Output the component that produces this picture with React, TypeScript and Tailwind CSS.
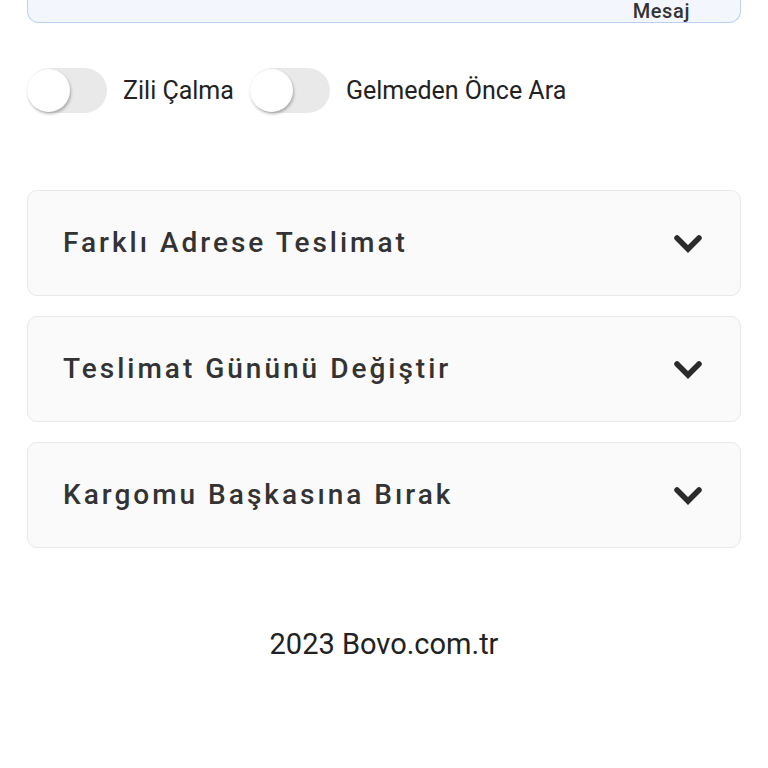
import { useState } from 'react';

const sections = ['Farklı Adrese Teslimat', 'Teslimat Gününü Değiştir', 'Kargomu Başkasına Bırak'];

function Toggle({ label }: { label: string }) {
  const [on, setOn] = useState(false);
  return (
    <button type="button" onClick={() => setOn(!on)} className="flex items-center gap-4">
      <span
        className={`flex h-[45px] w-[80px] items-center rounded-full ${on ? 'justify-end bg-[#9ec3f5]' : 'justify-start bg-[#e9e9e9]'}`}
      >
        <span className="h-[43px] w-[43px] rounded-full bg-white shadow-[1px_2px_3px_rgba(0,0,0,0.28)]" />
      </span>
      <span className="text-[25px] leading-none text-[#222]">{label}</span>
    </button>
  );
}

function ChevronDown() {
  return (
    <svg width="30" height="22" viewBox="0 0 30 22" fill="none">
      <path d="M4 6 L15 17 L26 6" stroke="#2b2b2b" strokeWidth="5.5" strokeLinecap="round" strokeLinejoin="miter" />
    </svg>
  );
}

export default function App() {
  const [open, setOpen] = useState<number | null>(null);

  return (
    <div className="min-h-[768px] bg-white px-[27px] font-['Roboto',sans-serif]">
      <div className="flex h-[23px] items-end justify-end rounded-b-[12px] border-x border-b border-[#b9d2f2] bg-[#f3f7fd] pr-[50px]">
        <span className="text-[20px] font-medium leading-[22px] tracking-[0.6px] text-[#333]">Mesaj</span>
      </div>

      <div className="mt-[45px] flex items-center gap-4">
        <Toggle label="Zili Çalma" />
        <Toggle label="Gelmeden Önce Ara" />
      </div>

      <div className="mt-[77px] flex flex-col gap-[20px]">
        {sections.map((title, i) => (
          <div key={title} className="rounded-[10px] border border-[#e9e9e9] bg-[#fafafa]">
            <button
              type="button"
              onClick={() => setOpen(open === i ? null : i)}
              className="flex h-[104px] w-full items-center justify-between pl-[35px] pr-[37px]"
            >
              <span className="text-[28px] font-medium tracking-[3px] text-[#333]">{title}</span>
              <ChevronDown />
            </button>
          </div>
        ))}
      </div>

      <p className="mt-[80px] text-center text-[29px] leading-[32px] text-[#222]">2023 Bovo.com.tr</p>
    </div>
  );
}
